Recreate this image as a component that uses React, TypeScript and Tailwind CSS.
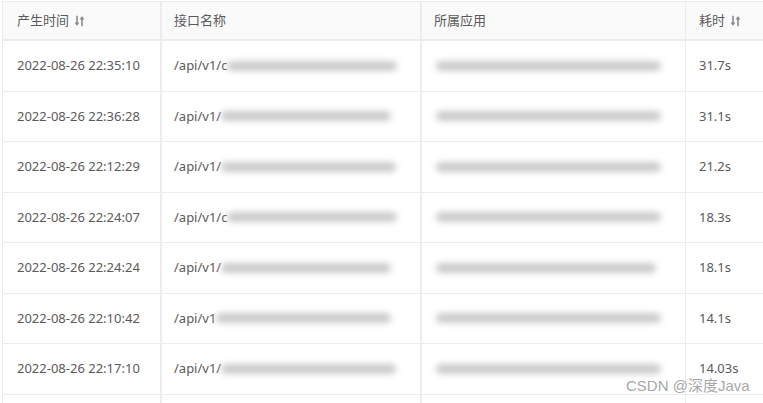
import React from "react";

const rows = [
  { t: "2022-08-26 22:35:10", api: "/api/v1/c", d: "31.7s", w2: 170, w3: 225 },
  { t: "2022-08-26 22:36:28", api: "/api/v1/", d: "31.1s", w2: 170, w3: 225 },
  { t: "2022-08-26 22:12:29", api: "/api/v1/", d: "21.2s", w2: 175, w3: 225 },
  { t: "2022-08-26 22:24:07", api: "/api/v1/c", d: "18.3s", w2: 170, w3: 225 },
  { t: "2022-08-26 22:24:24", api: "/api/v1/", d: "18.1s", w2: 170, w3: 220 },
  { t: "2022-08-26 22:10:42", api: "/api/v1", d: "14.1s", w2: 175, w3: 225 },
  { t: "2022-08-26 22:17:10", api: "/api/v1/", d: "14.03s", w2: 175, w3: 225 },
  { t: "", api: "", d: "", w2: 0, w3: 0 },
];

function SortIcon() {
  return (
    <svg width="11" height="12" viewBox="0 0 11 12" className="ml-[5px] inline-block" fill="none">
      <path d="M3 0.8 V9" stroke="#8c8c8c" strokeWidth="1.6" />
      <path d="M0.6 7.4 L3 11 L5.4 7.4 Z" fill="#8c8c8c" />
      <path d="M8 3 V11.2" stroke="#8c8c8c" strokeWidth="1.6" />
      <path d="M5.6 4.6 L8 1 L10.4 4.6 Z" fill="#8c8c8c" />
    </svg>
  );
}

function Blur({ w }: { w: number }) {
  return (
    <span
      className="inline-block h-[10px] rounded-full bg-[#cbcbcb] blur-[3px]"
      style={{ width: w }}
    />
  );
}

export default function App() {
  const font = { fontFamily: '"Noto Sans", "Noto Sans CJK SC", sans-serif' };
  return (
    <div className="relative w-[763px] h-[403px] overflow-hidden bg-white text-[13px] text-[#5a5a5a]" style={font}>
      <div className="ml-[2px] mt-[1px] w-[900px] border-l border-t border-[#ececec]">
        <div className="flex h-[39px] bg-[#fafafa] border-b-2 border-[#ececec]">
          <div className="w-[159px] flex items-center pl-[14px] border-r-2 border-[#ececec]">
            产生时间<SortIcon />
          </div>
          <div className="w-[260px] flex items-center pl-[12px] border-r-2 border-[#ececec]">接口名称</div>
          <div className="w-[264px] flex items-center pl-[12px] border-r border-[#ececec]">所属应用</div>
          <div className="flex-1 flex items-center pl-[13px]">
            耗时<SortIcon />
          </div>
        </div>
        {rows.map((r, i) => (
          <div key={i} className="flex h-[50.5px] border-b border-[#ececec] bg-white">
            <div className="w-[159px] flex items-center pl-[14px] border-r-2 border-[#ececec]">{r.t}</div>
            <div className="w-[260px] flex items-center pl-[12px] border-r-2 border-[#ececec]">
              <span>{r.api}</span>
              {r.w2 > 0 && <Blur w={r.w2} />}
            </div>
            <div className="w-[264px] flex items-center pl-[14px] border-r border-[#ececec]">
              {r.w3 > 0 && <Blur w={r.w3} />}
            </div>
            <div className="flex-1 flex items-center pl-[13px]">{r.d}</div>
          </div>
        ))}
      </div>
      <div className="absolute left-[626px] top-[375px] text-[15px] text-[#a8a8a8] whitespace-nowrap" style={{ fontFamily: '"Liberation Sans", "Noto Sans CJK SC", sans-serif' }}>
        CSDN @深度Java
      </div>
    </div>
  );
}
